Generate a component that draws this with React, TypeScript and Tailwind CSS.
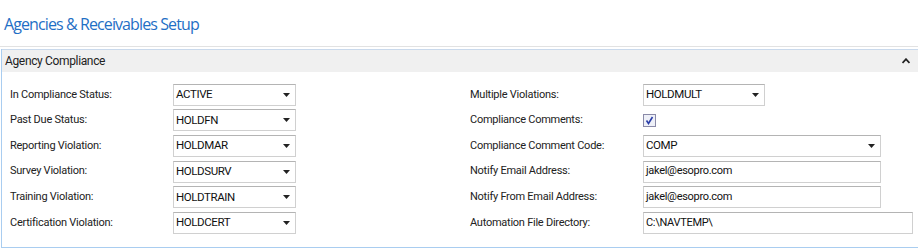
import React from "react";

const Arrow = () => (
  <svg width="7" height="4" viewBox="0 0 7 4" className="shrink-0">
    <path d="M0 0 H7 L3.5 4 Z" fill="#222" />
  </svg>
);

const valueFont = { fontFamily: 'Roboto, "Liberation Sans", sans-serif' };

const Select = ({ value, w }: { value: string; w: string }) => (
  <div
    className={`${w} h-[22px] flex items-center justify-between pl-[2px] pr-[5px] border border-[#d0d0d0] border-t-[#b4b4b4] bg-white text-[11.5px] tracking-[-0.4px] text-[#111]`}
    style={valueFont}
  >
    <span>{value}</span>
    <Arrow />
  </div>
);

const Input = ({ value, w }: { value: string; w: string }) => (
  <div
    className={`${w} h-[22px] flex items-center pl-[2px] border border-[#d0d0d0] border-t-[#b4b4b4] bg-white text-[11px] tracking-[-0.3px] text-[#111]`}
    style={valueFont}
  >
    <span>{value}</span>
  </div>
);

const Row = ({ label, labelW, children }: { label: string; labelW: string; children: React.ReactNode }) => (
  <div className="h-[25.6px] flex items-center">
    <div
      className={`${labelW} shrink-0 text-[11px] tracking-[-0.25px] text-[#222]`}
      style={{ fontFamily: 'Roboto, "Open Sans", sans-serif' }}
    >
      {label}
    </div>
    {children}
  </div>
);

export default function App() {
  const left = [
    ["In Compliance Status:", "ACTIVE"],
    ["Past Due Status:", "HOLDFN"],
    ["Reporting Violation:", "HOLDMAR"],
    ["Survey Violation:", "HOLDSURV"],
    ["Training Violation:", "HOLDTRAIN"],
    ["Certification Violation:", "HOLDCERT"],
  ];
  return (
    <div
      className="w-[918px] h-[251px] bg-white overflow-hidden"
      style={{ fontFamily: '"Open Sans", "Noto Sans", sans-serif' }}
    >
      <div className="h-[46px] pl-[4px] pt-[12px] text-[16px] leading-[24px] text-[#1f6fc5] tracking-[-0.9px]">
        Agencies &amp; Receivables Setup
      </div>
      <div className="h-px bg-[#e2e2e2]" />
      <div className="h-[2px]" />
      <div className="ml-[1px] border-l border-b border-[#a9cdf0] h-[199px]">
        <div className="h-[23px] border-t border-[#c9d9ec] bg-[#f0f0f0] flex items-center justify-between pl-[3px] pr-[8px]">
          <span
            className="text-[12px] text-[#222] tracking-[-0.35px]"
            style={{ fontFamily: 'Roboto, "Open Sans", sans-serif' }}
          >
            Agency Compliance
          </span>
          <svg width="8" height="6" viewBox="0 0 8 6">
            <path d="M0.5 5 L4 1.2 L7.5 5" stroke="#222" strokeWidth="1.8" fill="none" />
          </svg>
        </div>
        <div className="flex pt-[10px]">
          <div className="w-[459px] pl-[8px] flex flex-col">
            {left.map(([l, v]) => (
              <Row key={l} label={l} labelW="w-[163px]">
                <Select value={v} w="w-[123px]" />
              </Row>
            ))}
          </div>
          <div className="flex-1 pl-[9px] flex flex-col">
            <Row label="Multiple Violations:" labelW="w-[173px]">
              <Select value="HOLDMULT" w="w-[122px]" />
            </Row>
            <Row label="Compliance Comments:" labelW="w-[173px]">
              <div className="w-[13px] h-[13px] border border-[#8a8aa8] bg-[#eef0f8] flex items-center justify-center">
                <svg width="9" height="9" viewBox="0 0 9 9">
                  <path d="M1.5 4.5 L3.5 7.5 L7.5 1" stroke="#2a3ea8" strokeWidth="1.6" fill="none" />
                </svg>
              </div>
            </Row>
            <Row label="Compliance Comment Code:" labelW="w-[173px]">
              <Select value="COMP" w="w-[238px]" />
            </Row>
            <Row label="Notify Email Address:" labelW="w-[173px]">
              <Input value="jakel@esopro.com" w="w-[238px]" />
            </Row>
            <Row label="Notify From Email Address:" labelW="w-[173px]">
              <Input value="jakel@esopro.com" w="w-[238px]" />
            </Row>
            <Row label="Automation File Directory:" labelW="w-[173px]">
              <Input value="C:\NAVTEMP\" w="w-[270px]" />
            </Row>
          </div>
        </div>
      </div>
    </div>
  );
}
